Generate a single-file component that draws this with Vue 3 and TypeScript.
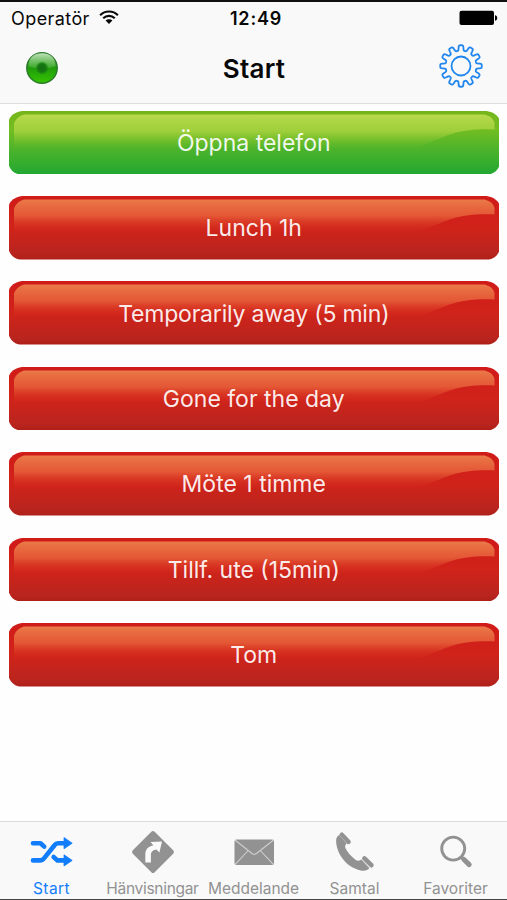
<script setup lang="ts">
interface Action {
  label: string
  tone: 'green' | 'red'
}

const actions: Action[] = [
  { label: 'Öppna telefon', tone: 'green' },
  { label: 'Lunch 1h', tone: 'red' },
  { label: 'Temporarily away (5 min)', tone: 'red' },
  { label: 'Gone for the day', tone: 'red' },
  { label: 'Möte 1 timme', tone: 'red' },
  { label: 'Tillf. ute (15min)', tone: 'red' },
  { label: 'Tom', tone: 'red' },
]

const tabs: string[] = ['Start', 'Hänvisningar', 'Meddelande', 'Samtal', 'Favoriter']

// Twelve-toothed outline: a squared-off cosine wave wrapped around a circle.
function gearPath(teeth: number, mid: number, depth: number): string {
  const points: string[] = []
  for (let i = 0; i < 720; i++) {
    const a = (i * Math.PI) / 360
    const r = mid + depth * Math.tanh(2.6 * (Math.cos(teeth * a) + 0.05))
    points.push(`${(22 + r * Math.sin(a)).toFixed(2)} ${(22 - r * Math.cos(a)).toFixed(2)}`)
  }
  return `M${points.join('L')}Z`
}

const gear = gearPath(12, 18.1, 2.7)
</script>

<template>
  <div class="screen">
    <header>
      <div class="status">
        <div class="carrier">
          <span>Operatör</span>
          <svg width="20" height="15" viewBox="0 0 20 15">
            <g fill="none" stroke="#0a0a0a" stroke-width="2.1">
              <path d="M1.1 5.2C6 .3 14 .3 18.9 5.2" />
              <path d="M4.2 8.3C7.5 5.1 12.5 5.1 15.8 8.3" />
            </g>
            <path d="M6.6 10.6C8.5 8.8 11.5 8.8 13.4 10.6L10 14Z" fill="#0a0a0a" />
          </svg>
        </div>
        <div class="clock">12:49</div>
        <div class="battery">
          <svg width="39" height="16" viewBox="0 0 39 16">
            <rect x=".5" y=".7" width="34.5" height="14.3" rx="2" />
            <path d="M36 5.2C39 5.6 39 10.4 36 10.8Z" />
          </svg>
        </div>
      </div>
      <div class="nav">
        <svg class="lamp" width="34" height="34" viewBox="0 0 34 34">
          <defs>
            <linearGradient id="lampBase" x1="0" y1="0" x2="0" y2="1">
              <stop offset="0" stop-color="#3f9a35" />
              <stop offset=".5" stop-color="#209c0c" />
              <stop offset="1" stop-color="#35c400" />
            </linearGradient>
            <linearGradient id="lampShine" x1="0" y1="0" x2="0" y2="1">
              <stop offset="0" stop-color="#e0f5dc" stop-opacity=".8" />
              <stop offset="1" stop-color="#8fd47e" stop-opacity=".25" />
            </linearGradient>
            <radialGradient id="lampCore">
              <stop offset="0" stop-color="#126d12" />
              <stop offset=".65" stop-color="#187a12" />
              <stop offset="1" stop-color="#188a0b" stop-opacity=".2" />
            </radialGradient>
          </defs>
          <circle cx="17" cy="17" r="15.2" fill="url(#lampBase)" stroke="#2b7c2b" stroke-width="1.5" />
          <path d="M3.5 15C3.5 6.5 9 2.3 17 2.3S30.5 6.5 30.5 15C26 18 8 18 3.5 15Z" fill="url(#lampShine)" />
          <circle cx="17" cy="17" r="6.5" fill="url(#lampCore)" />
        </svg>
        <h1>Start</h1>
        <svg class="gear" width="44" height="44" viewBox="0 0 44 44" fill="none" stroke="#2187ee" stroke-width="1.8">
          <path :d="gear" stroke-linejoin="round" />
          <circle cx="22" cy="22" r="9.5" />
        </svg>
      </div>
    </header>

    <main>
      <svg class="defs" width="0" height="0">
        <defs>
          <linearGradient id="base-green" x1="0" y1="0" x2="0" y2="1">
            <stop offset="0" stop-color="#76b51a" />
            <stop offset=".3" stop-color="#72bd22" />
            <stop offset=".62" stop-color="#4bb32b" />
            <stop offset=".9" stop-color="#2dab30" />
            <stop offset="1" stop-color="#20a535" />
          </linearGradient>
          <linearGradient id="base-red" x1="0" y1="0" x2="0" y2="1">
            <stop offset="0" stop-color="#d01b18" />
            <stop offset=".5" stop-color="#d0231a" />
            <stop offset=".9" stop-color="#b9251e" />
            <stop offset="1" stop-color="#ae1f18" />
          </linearGradient>
          <linearGradient id="gloss-green" gradientUnits="userSpaceOnUse" x1="0" y1="3" x2="0" y2="38">
            <stop offset="0" stop-color="#b9da4c" />
            <stop offset=".5" stop-color="#a9d441" stop-opacity=".8" />
            <stop offset="1" stop-color="#78c02a" stop-opacity="0" />
          </linearGradient>
          <linearGradient id="gloss-red" gradientUnits="userSpaceOnUse" x1="0" y1="3" x2="0" y2="37">
            <stop offset="0" stop-color="#eb7b49" />
            <stop offset=".5" stop-color="#e9653c" stop-opacity=".8" />
            <stop offset="1" stop-color="#d8301f" stop-opacity="0" />
          </linearGradient>
        </defs>
      </svg>
      <button v-for="action in actions" :key="action.label" type="button" class="action">
        <svg viewBox="0 0 491 64" preserveAspectRatio="none">
          <path
            d="M13 0H478C485 1 490 5 491 9V55C489 60 485 64 478 64H13C6 64 2 60 0 55V9C1 5 6 1 13 0Z"
            :fill="`url(#base-${action.tone})`"
          />
          <path
            d="M5 13C6 9 10 5 15 3.5H476C482 5 485 8 486 12V18.5C451 17.5 444 23 425 30L405 38H5Z"
            :fill="`url(#gloss-${action.tone})`"
          />
        </svg>
        <span :class="{ long: action.label.length > 20 }">{{ action.label }}</span>
      </button>
    </main>

    <nav class="tabs">
      <a v-for="(tab, index) in tabs" :key="tab" :class="['tab' + index, { active: index === 0 }]">
        <svg width="48" height="48" viewBox="0 0 48 48">
          <g v-if="index === 0">
            <g fill="none" stroke="currentColor" stroke-width="4.6" stroke-linecap="round" stroke-linejoin="round">
              <path d="M5 15.2H12.5L16.2 18.6M25.6 29L29.5 32.4H37" />
              <path d="M5 32.4H12.5Q14.5 32.4 16 30.4L26.5 17.2Q28 15.2 30 15.2H37" />
            </g>
            <path d="M36 9.6L44.2 15.2L36 20.8ZM36 26.8L44.2 32.4L36 38Z" fill="currentColor" stroke="currentColor" stroke-width=".8" stroke-linejoin="round" />
          </g>
          <g v-else-if="index === 1">
            <path d="M24 4.5L43.5 24L24 43.5L4.5 24Z" fill="currentColor" stroke="currentColor" stroke-width="5" stroke-linejoin="round" transform="translate(1.2 1.2) scale(.95)" />
            <path d="M16.3 34.5V26.5C16.3 21 19.5 18 24.4 17.4L21.6 14L33 13.4L30.4 24.5L27.5 21.5C24 22 22 23.5 21.9 27V34.5Z" fill="#fafafa" />
          </g>
          <g v-else-if="index === 2">
            <rect x="4.5" y="11.5" width="39.5" height="25.5" rx="2" fill="currentColor" />
            <path d="M5 12L22 25.5Q24.2 27 26.5 25.5L43.5 12M5 36.7L18.2 22.5M43.5 36.7L30.3 22.5" fill="none" stroke="#cfcfcf" stroke-width="1.1" />
          </g>
          <g v-else-if="index === 3">
            <path d="M5.2 11.5C4.3 22 13 39.5 31 42.7C34.8 43.1 37 42 38.4 40.3L30.2 31.5C28 33.2 26.5 33.2 24.5 31.8C20 28.5 16.5 24.2 14.5 20.3C13.7 18.2 14.2 17.2 15.7 15.3L8.5 6.8C6.5 8 5.5 9.4 5.2 11.5Z" fill="currentColor" />
            <path d="M10.8 6.8L17.5 13.8M33.4 30.4L40.4 37.2" fill="none" stroke="currentColor" stroke-width="4.6" stroke-linecap="round" />
            <path d="M8.3 7.2L15.8 15.2M31 31.6L38.8 39.6" fill="none" stroke="#bdbdbd" stroke-width=".7" />
          </g>
          <g v-else fill="none" stroke="currentColor">
            <circle cx="21.2" cy="20.6" r="11.5" stroke-width="2.9" />
            <path d="M28.8 28.6L32 31.8" stroke-width="3.4" />
            <path d="M31.7 31.3L37.2 36.6" stroke-width="5" stroke-linecap="round" />
          </g>
        </svg>
        <span>{{ tab }}</span>
      </a>
    </nav>
  </div>
</template>

<style>
body {
  background: #fff;
}
</style>

<style scoped>
.screen {
  box-sizing: border-box;
  display: flex;
  flex-direction: column;
  width: 507px;
  height: 900px;
  overflow: hidden;
  border-top: 2px solid #111;
  border-bottom: 1px solid #444;
  background: #fefefe;
  color: #080808;
  font-family: Inter, "Liberation Sans", sans-serif;
}
header {
  box-sizing: border-box;
  height: 102px;
  flex: none;
  background: #f9f9f9;
  border-bottom: 1px solid #dedede;
}
.status {
  display: grid;
  grid-template-columns: 1fr auto 1fr;
  align-items: center;
  height: 32px;
  padding: 0 9px 0 11px;
  font-size: 18px;
}
.carrier {
  display: flex;
  align-items: center;
  gap: 9px;
  letter-spacing: 0.42px;
}
.carrier svg {
  margin-bottom: 2px;
}
.clock {
  font-size: 18px;
  font-weight: 600;
  letter-spacing: 0.8px;
  margin-left: 3px;
}
.battery {
  display: flex;
  justify-content: flex-end;
}
.nav {
  display: grid;
  grid-template-columns: 1fr auto 1fr;
  align-items: center;
  height: 66px;
  padding: 0 24px 0 25px;
}
.lamp {
  margin-top: 2px;
}
.gear {
  justify-self: end;
  margin-bottom: 3px;
}
h1 {
  margin: 3px 0 0;
  font-size: 26px;
  line-height: 32px;
  font-weight: 600;
  letter-spacing: 0.3px;
}
main {
  flex: 1;
  display: flex;
  flex-direction: column;
  gap: 21.8px;
  padding: 6.6px 8px 0 8.5px;
}
.defs {
  position: absolute;
}
.action {
  display: grid;
  place-items: center;
  height: 63.6px;
  flex: none;
  padding: 0;
  border: 0;
  background: none;
  color: rgba(255, 255, 255, 0.92);
  font: 400 23px/30px Inter, "Liberation Sans", sans-serif;
}
.action svg,
.action span {
  grid-area: 1 / 1;
}
.action span {
  padding-top: 1px;
}
.action .long {
  letter-spacing: -0.2px;
}
.action svg {
  display: block;
  width: 100%;
  height: 63.6px;
}
.tabs {
  box-sizing: border-box;
  display: grid;
  grid-template-columns: repeat(5, 101px);
  justify-content: center;
  height: 78px;
  flex: none;
  padding-top: 6px;
  border-top: 1px solid #dcdcdc;
  background: #f9f9f9;
}
.tabs a {
  display: flex;
  flex-direction: column;
  align-items: center;
  color: #929292;
  font-size: 15.5px;
  line-height: 20px;
  white-space: nowrap;
}
.tabs span {
  margin-top: 3px;
}
.tabs .tab1 span {
  letter-spacing: -0.3px;
}
.tabs .tab0 span {
  letter-spacing: 0.4px;
}
.tabs a.active {
  color: #127dfb;
}
</style>
